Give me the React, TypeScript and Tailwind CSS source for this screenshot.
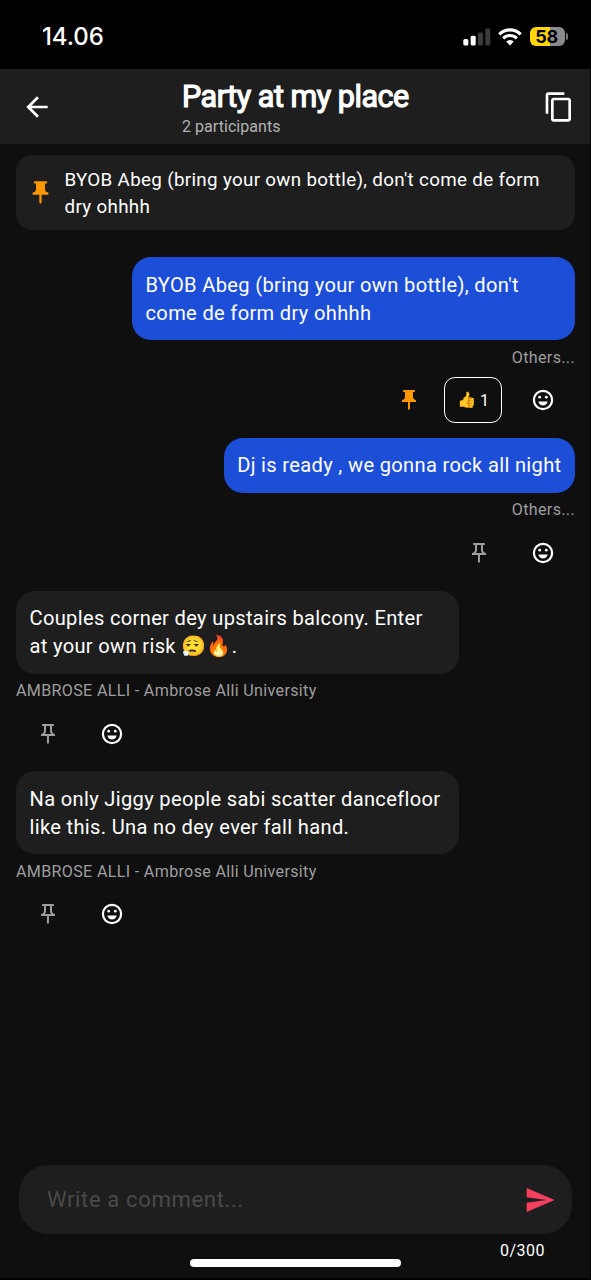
import { MdArrowBack, MdContentCopy, MdOutlinePushPin, MdPushPin, MdSend } from "react-icons/md"

const messages = [
  {
    lines: ["BYOB Abeg (bring your own bottle), don't", "come de form dry ohhhh"],
    author: "Others...",
    mine: true,
    pinned: true,
    likes: 1,
  },
  {
    lines: ["Dj is ready , we gonna rock all night"],
    author: "Others...",
    mine: true,
  },
  {
    lines: ["Couples corner dey upstairs balcony. Enter", "at your own risk 😮‍💨🔥."],
    author: "AMBROSE ALLI - Ambrose Alli University",
  },
  {
    lines: ["Na only Jiggy people sabi scatter dancefloor", "like this. Una no dey ever fall hand."],
    author: "AMBROSE ALLI - Ambrose Alli University",
  },
]

const SmileIcon = () => (
  <svg className="size-6" viewBox="0 0 24 24" fill="white">
    <circle cx="12" cy="12" r="9.1" fill="none" stroke="white" strokeWidth="2.2" />
    <circle cx="8.7" cy="9.2" r="1.4" />
    <circle cx="15.3" cy="9.2" r="1.4" />
    <path d="M7.3 13.6H16.7C16 16.1 14.2 17.6 12 17.6S8 16.1 7.3 13.6Z" />
  </svg>
)

const StatusBar = () => (
  <div className="flex h-[69px] shrink-0 items-center justify-between bg-black pt-1 pr-[22px] pl-[42px]">
    <span className="font-['Inter'] text-[24px] font-medium tracking-[-0.1px]">14.06</span>
    <div className="flex items-center">
      <svg width="28" height="18" viewBox="0 0 28 18" fill="white">
        <rect x="0.3" y="11" width="5" height="6.5" rx="1.5" />
        <rect x="7.7" y="7.7" width="5" height="9.8" rx="1.5" />
        <rect x="15" y="4.5" width="5" height="13" rx="1.5" fill="#3a3a3a" />
        <rect x="22.3" y="0.5" width="5" height="17" rx="1.5" fill="#3a3a3a" />
      </svg>
      <svg className="ml-[7px]" width="24" height="18" viewBox="0 0 24 18" fill="none" stroke="white" strokeWidth="3.2">
        <path d="M1.3 6.3A15.2 15.2 0 0 1 22.7 6.3" />
        <path d="M5.2 10.3A9.7 9.7 0 0 1 18.8 10.3" />
        <path d="M12 17.5L8.2 13.6A5.4 5.4 0 0 1 15.8 13.6Z" fill="white" stroke="none" />
      </svg>
      <div className="ml-2 flex h-[19px] w-[35px] items-center justify-center rounded-[6px] bg-[linear-gradient(to_right,#ffd60a_58%,#8a8a8d_58%)] pr-0.5 font-['Inter'] text-[18px] font-bold tracking-[-0.3px] text-black">
        58
      </div>
      <div className="ml-px h-[7px] w-[2px] rounded-r-full bg-[#777]" />
    </div>
  </div>
)

const Header = () => (
  <header className="flex h-[75px] shrink-0 items-center bg-[#1e1e1e] pr-[15px] pl-[21px]">
    <MdArrowBack className="size-8" />
    <div className="ml-[129px] flex-1 pt-[3px]">
      <h1 className="text-[30.5px] leading-[34px] tracking-[-0.48px] whitespace-nowrap [-webkit-text-stroke:1.2px_white]">
        Party at my place
      </h1>
      <p className="mt-[3px] text-[16px] leading-[20px] tracking-[0.05px] text-[#b3b3b3]">2 participants</p>
    </div>
    <MdContentCopy className="size-8" />
  </header>
)

const Message = ({ message }) => {
  const { lines, author, mine, pinned, likes } = message

  return (
    <div className={mine ? "flex flex-col items-end" : "flex flex-col items-start"}>
      <div
        className={
          "rounded-[19px] p-[13.5px] " +
          (mine ? "bg-[#1d4ed8] " : "bg-[#1e1e1e] ") +
          (lines.length > 1 ? "w-[443px]" : "")
        }
      >
        <p className="text-[20.1px] leading-[28px] tracking-[0.33px]">
          {lines.map((line) => (
            <span key={line} className="block whitespace-nowrap">{line}</span>
          ))}
        </p>
      </div>
      <p className="mt-[7.5px] text-[16.1px] leading-[20px] tracking-[0.33px] text-[#9e9e9e]">{author}</p>

      {/* Pin and reactions */}
      <div className="mt-[9.5px] flex h-[46px] items-center">
        <div className="flex w-16 justify-center">
          {pinned ? (
            <MdPushPin className="size-6 text-[#ff9800]" />
          ) : (
            <MdOutlinePushPin className="size-6 text-[#9e9e9e]" />
          )}
        </div>
        {likes && (
          <div className="mr-[9px] ml-[3px] flex h-[46px] w-[58px] items-center justify-center gap-1 rounded-[11px] border-[1.5px] border-white pt-0.5">
            <span className="text-[15.5px]">👍</span>
            <span className="text-[16px]">{likes}</span>
          </div>
        )}
        <div className="flex w-16 justify-center">
          <SmileIcon />
        </div>
      </div>
    </div>
  )
}

const App = () => {
  return (
    <div className="flex h-[1280px] w-[591px] flex-col border-r border-b-2 border-black bg-[#0f0f0f] font-['Roboto',sans-serif] text-white">
      <StatusBar />
      <Header />

      <main className="flex-1 pt-[11px] pr-[15px] pl-4">
        {/* Pinned message */}
        <div className="flex h-[75px] items-center rounded-[16px] bg-[#1e1e1e] pl-[10.5px]">
          <MdPushPin className="size-[27px] text-[#ff9800]" />
          <p className="ml-[11px] pt-0.5 text-[18.8px] leading-[26.5px] tracking-[0.32px]">
            BYOB Abeg (bring your own bottle), don't come de form
            <br />
            dry ohhhh
          </p>
        </div>

        <div className="mt-[27px] flex flex-col gap-[14.75px]">
          {messages.map((message, index) => (
            <Message key={index} message={message} />
          ))}
        </div>
      </main>

      {/* Comment box */}
      <footer className="pr-[18px] pl-[19px]">
        <div className="flex h-[69px] items-center justify-between rounded-[29px] bg-[#1e1e1e] pr-4 pl-7">
          <span className="pt-px text-[22.2px] tracking-[0.57px] text-[#4a4a4a]">Write a comment...</span>
          <MdSend className="size-8 text-[#f43f5e]" />
        </div>
        <p className="mt-2 pr-[27px] text-right text-[16px] leading-[17px] tracking-[0.5px]">0/300</p>
        <div className="mx-auto mb-[11px] h-2 w-[211px] rounded-full bg-white" />
      </footer>
    </div>
  )
}

export default App
